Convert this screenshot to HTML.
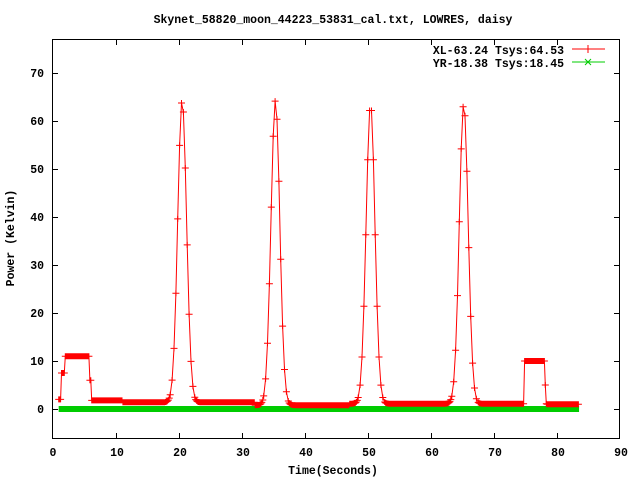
<!DOCTYPE html>
<html><head><meta charset="utf-8"><style>
html,body{margin:0;padding:0;background:#fff;width:640px;height:480px;overflow:hidden}
svg text{font-family:"Liberation Mono",monospace;font-weight:bold;font-size:11.5px;fill:#000}
</style></head><body>
<svg id="s" width="640" height="480" xmlns="http://www.w3.org/2000/svg">
<rect width="640" height="480" fill="#fff"/>
<text x="333" y="23" text-anchor="middle">Skynet_58820_moon_44223_53831_cal.txt, LOWRES, daisy</text>
<g text-anchor="end">
<text x="44" y="77">70</text><text x="44" y="125">60</text><text x="44" y="173">50</text>
<text x="44" y="221">40</text><text x="44" y="269">30</text><text x="44" y="317">20</text>
<text x="44" y="365">10</text><text x="44" y="413">0</text>
</g>
<g text-anchor="middle">
<text x="53" y="456">0</text><text x="117" y="456">10</text><text x="180" y="456">20</text>
<text x="243" y="456">30</text><text x="306" y="456">40</text><text x="369" y="456">50</text>
<text x="432" y="456">60</text><text x="495" y="456">70</text><text x="558" y="456">80</text>
<text x="621" y="456">90</text>
<text x="333" y="474">Time(Seconds)</text>
<text transform="translate(14,238) rotate(-90)">Power (Kelvin)</text>
</g>
<g text-anchor="end">
<text x="564" y="54">XL-63.24 Tsys:64.53</text>
<text x="564" y="67">YR-18.38 Tsys:18.45</text>
</g>
<line x1="572" y1="49" x2="605" y2="49" stroke="#f00"/>
<line x1="588" y1="45" x2="588" y2="53" stroke="#f00"/>
<line x1="572" y1="62" x2="605" y2="62" stroke="#0c0"/>
<path d="M585 59l6 6M591 59l-6 6" stroke="#0c0"/>
<g id="plot"></g>
<rect x="52.5" y="39.5" width="567" height="399" fill="none" stroke="#000"/>
<g id="ticks" stroke="#000"></g>
</svg>
<script>
var X=function(t){return 53+6.3*t},Y=function(v){return 409-4.8*v};
var tk='';
for(var v=0;v<=70;v+=10){var y=Y(v)+.5;tk+='<line x1="53" y1="'+y+'" x2="58" y2="'+y+'"/><line x1="614" y1="'+y+'" x2="619" y2="'+y+'"/>';}
for(var t=10;t<90;t+=10){var x=Math.round(X(t))+.5;tk+='<line x1="'+x+'" y1="433" x2="'+x+'" y2="438"/><line x1="'+x+'" y1="40" x2="'+x+'" y2="45"/>';}
document.getElementById('ticks').innerHTML=tk;
var C=[20.5,35.3,50.4,65.2];
function g(t,c,h){return h*Math.exp(-Math.pow((t-c)/0.7,2)/2);}
function f(t){
 if(t<1.3)return 2; if(t<1.9)return 7.5; if(t<5.8)return 11; if(t<6.1)return 6;
 var b=t<11?1.8:(t<18?1.4:(t<32?1.4:(t<47?0.8:1.1)));
 if(t>=74.8&&t<78)b=10; if(t>=78&&t<78.3)b=5; if(t>78.3)b=1;
 return b+g(t,20.5,63)+g(t,35.3,63.5)+g(t,50.4,62.5)+g(t,65.2,62.5);
}
function near(t){for(var i=0;i<4;i++)if(Math.abs(t-C[i])<2)return true;return false;}
var pts=[],h='';
for(var t=0.9;t<=83.5;){pts.push([X(t),Y(f(t))]);t+=near(t)?0.3:0.15;}
h+='<rect x="'+X(0.9)+'" y="'+(Y(0)-3)+'" width="'+(X(83.5)-X(0.9))+'" height="6" fill="#0c0"/>';
h+='<polyline fill="none" stroke="#f00" points="'+pts.map(function(p){return p[0].toFixed(1)+','+p[1].toFixed(1)}).join(' ')+'"/>';
var m='';
for(var i=0;i<pts.length;i++){var p=pts[i];m+='M'+(p[0]-3.5).toFixed(1)+' '+p[1].toFixed(1)+'h7M'+p[0].toFixed(1)+' '+(p[1]-3).toFixed(1)+'v6';}
h+='<path d="'+m+'" stroke="#f00" fill="none"/>';
document.getElementById('plot').innerHTML=h;
</script>
</body></html>
